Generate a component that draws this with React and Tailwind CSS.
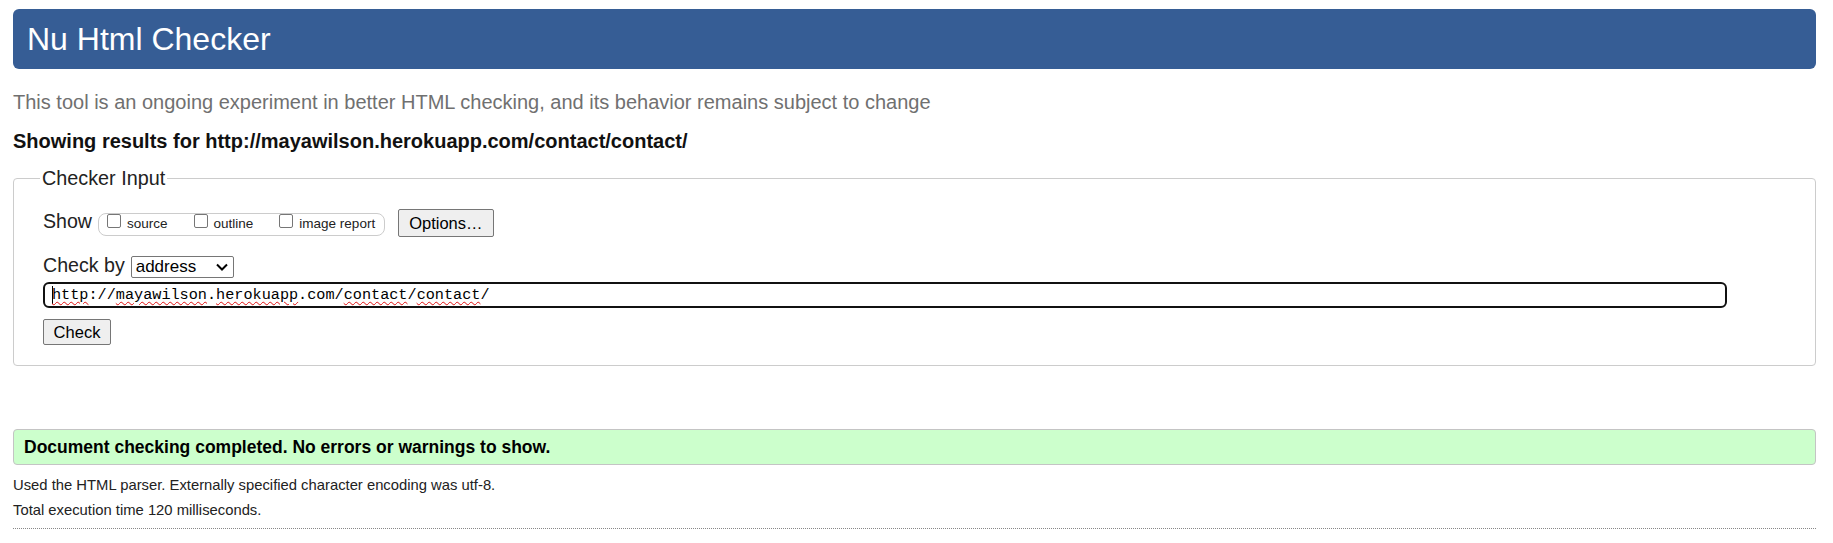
import React from "react";

const font = { fontFamily: '"Liberation Sans", Arial, sans-serif' };

function Box() {
  return <span className="block w-[14px] h-[14px] shrink-0 border border-[#767676] rounded-[2px] bg-white" />;
}

function Opt({ label, last }) {
  return (
    <span className={"flex items-start " + (last ? "" : "mr-[26px]")}>
      <Box />
      <span className="ml-[6px] mt-[2px] text-[13.5px] leading-[15px] text-[#222]">{label}</span>
    </span>
  );
}

const Sp = ({ children }) => (
  <span className="underline decoration-wavy decoration-[#e01010] decoration-[1px] underline-offset-[2px]">{children}</span>
);

export default function App() {
  return (
    <div className="bg-white w-[1833px] h-[543px] overflow-hidden pl-[13px] pr-[17px] pt-[9px] text-[#111]" style={font}>
      <div className="h-[60px] rounded-[6px] bg-[#365d95] pl-[14px] flex items-center text-white text-[32px] leading-[37px]">
        Nu Html Checker
      </div>
      <p className="mt-[22px] text-[20px] leading-[22px] text-[#707070]">
        This tool is an ongoing experiment in better HTML checking, and its behavior remains subject to change
      </p>
      <p className="mt-[17px] text-[20px] leading-[22px] font-bold text-[#111]">
        Showing results for http://mayawilson.herokuapp.com/contact/contact/
      </p>
      <fieldset className="mt-[15px] border border-[#cccccc] rounded-[4px] pl-[29px] pr-[29px] pb-[20px] text-[#222]">
        <legend className="px-[2px] -ml-[3px] text-[19.8px] leading-[23px]">Checker Input</legend>
        <div className="mt-[19px] flex items-start h-[28px]">
          <span className="mt-[1px] text-[19.6px] leading-[23px]">Show</span>
          <span className="ml-[6px] mt-[4px] h-[23px] flex items-start border border-[#cccccc] rounded-[8px] pl-[8px] pr-[9px]">
            <Opt label="source" />
            <Opt label="outline" />
            <Opt label="image report" last />
          </span>
          <button className="ml-[13px] h-[28px] px-[10px] bg-[#efefef] border border-[#767676] rounded-[2px] text-[16.5px] leading-[20px] text-black">
            Options…
          </button>
        </div>
        <div className="mt-[19px] flex items-start h-[22px]">
          <span className="-mt-[2px] text-[19.6px] leading-[23px]">Check by</span>
          <span className="ml-[6px] w-[103px] h-[22px] flex items-center justify-between border border-[#767676] rounded-[2px] pl-[4px] pr-[4px] text-[17px] leading-[20px] text-black bg-white">
            <span>address</span>
            <svg width="12" height="8" viewBox="0 0 12 8" className="mr-[1px]">
              <path d="M1 1.5 L6 6.5 L11 1.5" fill="none" stroke="#000" strokeWidth="2" />
            </svg>
          </span>
        </div>
        <div
          className="mt-[4px] w-[1684px] h-[26px] border-2 border-[#111] rounded-[6px] pl-[7px] flex items-center text-[15.2px] leading-[18px] text-black"
          style={{ fontFamily: '"Liberation Mono", "DejaVu Sans Mono", monospace' }}
        >
          <span className="inline-block w-[1px] h-[18px] bg-black mr-[-1px]" />
          <span className="whitespace-pre">
            <Sp>http</Sp>://<Sp>mayawilson</Sp>.<Sp>herokuapp</Sp>.com/<Sp>contact</Sp>/<Sp>contact</Sp>/
          </span>
        </div>
        <button className="mt-[11px] block h-[26px] w-[68px] bg-[#efefef] border border-[#767676] rounded-[2px] text-[16.5px] leading-[20px] text-black">
          Check
        </button>
      </fieldset>
      <div className="mt-[63px] h-[36px] flex items-center bg-[#ccffcc] border border-[#c4c4c4] rounded-[4px] pl-[10px] text-[17.5px] leading-[20px] font-bold text-black">
        Document checking completed. No errors or warnings to show.
      </div>
      <p className="mt-[12px] text-[14.8px] leading-[17px] text-[#222]">
        Used the HTML parser. Externally specified character encoding was utf-8.
      </p>
      <p className="mt-[8px] text-[14.8px] leading-[17px] text-[#222]">Total execution time 120 milliseconds.</p>
      <div className="mt-[9px] border-t border-dotted border-[#888]" />
    </div>
  );
}
